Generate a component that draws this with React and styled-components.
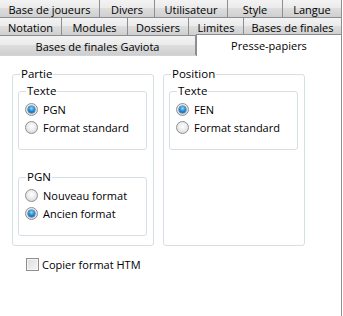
import styled, { createGlobalStyle } from "styled-components";

const GlobalStyle = createGlobalStyle`
  body {
    margin: 0;
    background: #fff;
    font-family: "Open Sans", "Noto Sans", sans-serif;
    font-size: 11px;
    color: #000;
  }
`;

const topRow = [
  ["Base de joueurs", 100],
  ["Divers", 55],
  ["Utilisateur", 73],
  ["Style", 55],
  ["Langue", 59],
];

const midRow = [
  ["Notation", 62],
  ["Modules", 66],
  ["Dossiers", 61],
  ["Limites", 55],
  ["Bases de finales", 98],
];

function Radio({ checked, children }) {
  return (
    <OptionRow>
      <RadioDot checked={checked} />
      <span>{children}</span>
    </OptionRow>
  );
}

export default function App() {
  return (
    <Page>
      <GlobalStyle />
      <TabRow>
        {topRow.map(([label, w]) => (
          <Tab key={label} w={w}>
            {label}
          </Tab>
        ))}
      </TabRow>
      <TabRow>
        {midRow.map(([label, w]) => (
          <Tab key={label} w={w}>
            {label}
          </Tab>
        ))}
      </TabRow>
      <TabRow>
        <Tab w={196} tall>
          Bases de finales Gaviota
        </Tab>
        <ActiveTab>Presse-papiers</ActiveTab>
      </TabRow>
      <Panel>
        <Columns>
          <GroupBox>
            <Legend>Partie</Legend>
            <InnerBox>
              <Legend small>Texte</Legend>
              <Radio checked>PGN</Radio>
              <Radio>Format standard</Radio>
            </InnerBox>
            <InnerBox spaced>
              <Legend small>PGN</Legend>
              <Radio>Nouveau format</Radio>
              <Radio checked>Ancien format</Radio>
            </InnerBox>
          </GroupBox>
          <GroupBox>
            <Legend>Position</Legend>
            <InnerBox>
              <Legend small>Texte</Legend>
              <Radio checked>FEN</Radio>
              <Radio>Format standard</Radio>
            </InnerBox>
          </GroupBox>
        </Columns>
        <CheckRow>
          <CheckBox />
          <span>Copier format HTM</span>
        </CheckRow>
      </Panel>
    </Page>
  );
}

const Page = styled.div`
  width: 342px;
  height: 316px;
  display: flex;
  flex-direction: column;
`;

const TabRow = styled.div`
  display: flex;
  align-items: flex-end;
`;

const Tab = styled.div`
  box-sizing: border-box;
  width: ${({ w }) => w}px;
  height: ${({ tall }) => (tall ? 19 : 18)}px;
  border-right: 1px solid #8c8e94;
  border-bottom: ${({ tall }) => (tall ? "none" : "1px solid #8c8e94")};
  background: linear-gradient(#f3f3f3, #ebebeb 45%, #dddddd 50%, #cfcfcf);
  display: flex;
  align-items: center;
  justify-content: center;
  white-space: nowrap;
  line-height: 1;
  padding-top: 1px;
`;

const ActiveTab = styled.div`
  box-sizing: border-box;
  position: relative;
  z-index: 1;
  width: 146px;
  height: 22px;
  margin-top: -2px;
  margin-bottom: -1px;
  background: #fff;
  border: 1px solid #8c8e94;
  border-bottom: none;
  display: flex;
  justify-content: center;
  padding-top: 3px;
  white-space: nowrap;
`;

const Panel = styled.div`
  flex: 1;
  border-top: 1px solid #cfd5dc;
  border-right: 1px solid #8c8e94;
  padding: 11px 0 0 12px;
`;

const Columns = styled.div`
  display: grid;
  grid-template-columns: 142px 142px;
  gap: 9px;
`;

const GroupBox = styled.fieldset`
  margin: 0;
  min-width: 0;
  padding: 3px 6px 9px 5px;
  border: 1px solid #d5dfe5;
  border-radius: 3px;
`;

const InnerBox = styled.fieldset`
  margin: ${({ spaced }) => (spaced ? "20px 0 0" : "0")};
  min-width: 0;
  padding: 2px 6px 13px 6px;
  border: 1px solid #d5dfe5;
  border-radius: 3px;
`;

const Legend = styled.legend`
  padding: 0 1px;
  margin-left: ${({ small }) => (small ? 1 : 2)}px;
  line-height: 14px;
  font-size: 11.5px;
`;

const OptionRow = styled.label`
  display: flex;
  align-items: center;
  gap: 5px;
  height: 18px;
  white-space: nowrap;
`;

const RadioDot = styled.span`
  box-sizing: border-box;
  position: relative;
  width: 13px;
  height: 13px;
  flex: none;
  border-radius: 50%;
  border: 1px solid #8f9092;
  background: radial-gradient(circle at 50% 40%, #ffffff, #e8e8e8 55%, #c9c9c9);
  &::after {
    content: "";
    display: ${({ checked }) => (checked ? "block" : "none")};
    position: absolute;
    left: 2px;
    top: 2px;
    width: 7px;
    height: 7px;
    border-radius: 50%;
    background: radial-gradient(circle at 50% 35%, #8fdcff, #2b8fd6 45%, #0b4c8c);
    box-shadow: 0 0 0 0.5px #1e5f9a;
  }
`;

const CheckRow = styled.label`
  display: flex;
  align-items: center;
  gap: 3px;
  margin: 12px 0 0 14px;
  height: 13px;
  white-space: nowrap;
`;

const CheckBox = styled.span`
  box-sizing: border-box;
  width: 13px;
  height: 13px;
  border: 1px solid #8f8f8f;
  background: linear-gradient(135deg, #dcdcdc, #f6f6f6);
  box-shadow: inset 0 0 0 1px #f4f4f4;
`;
